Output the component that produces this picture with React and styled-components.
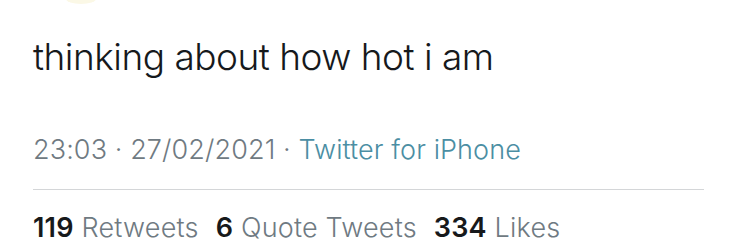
import styled, { createGlobalStyle } from "styled-components";

const GlobalStyle = createGlobalStyle`
  body {
    margin: 0;
    background: #ffffff;
    font-family: Inter, "Noto Sans", sans-serif;
  }
`;

const Tweet = styled.div`
  width: 736px;
  height: 246px;
  box-sizing: border-box;
  padding: 34px 32px 0 33px;
  overflow: hidden;
  position: relative;
`;

const Blob = styled.div`
  position: absolute;
  top: -6px;
  left: 66px;
  width: 30px;
  height: 10px;
  border-radius: 50%;
  background: #fbf8e6;
`;

const Body = styled.p`
  margin: 0;
  font-size: 37px;
  font-weight: 300;
  line-height: 46px;
  color: #16191c;
  letter-spacing: -0.5px;
`;

const Meta = styled.div`
  margin-top: 54px;
  font-size: 27px;
  font-weight: 300;
  line-height: 32px;
  color: #6f7a82;
  letter-spacing: 0.1px;
`;

const Source = styled.span`
  color: #4b8ea3;
`;

const Divider = styled.hr`
  margin: 23px 0 0;
  border: none;
  border-top: 1px solid #d4d6d8;
`;

const Stats = styled.div`
  display: flex;
  gap: 17px;
  margin-top: 22px;
  font-size: 27px;
  font-weight: 300;
  line-height: 32px;
  color: #6f7a82;
  letter-spacing: 0.2px;
`;

const Count = styled.b`
  font-weight: 600;
  color: #17191b;
`;

const stats = [
  ["119", "Retweets"],
  ["6", "Quote Tweets"],
  ["334", "Likes"],
];

export default function App() {
  return (
    <>
      <GlobalStyle />
      <Tweet>
        <Blob />
        <Body>thinking about how hot i am</Body>
        <Meta>
          23:03 · 27/02/2021 · <Source>Twitter for iPhone</Source>
        </Meta>
        <Divider />
        <Stats>
          {stats.map(([n, label]) => (
            <span key={label}>
              <Count>{n}</Count> {label}
            </span>
          ))}
        </Stats>
      </Tweet>
    </>
  );
}
